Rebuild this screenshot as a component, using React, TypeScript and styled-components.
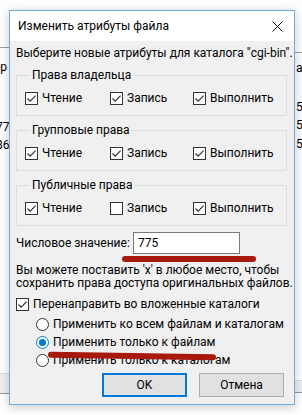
import React, { FC } from 'react';
import styled, { createGlobalStyle } from 'styled-components';

const GlobalStyle = createGlobalStyle`
  html, body {
    margin: 0;
    padding: 0;
    background: #fff;
  }
  * {
    box-sizing: border-box;
  }
`;

const font = `Roboto, "Noto Sans", "Liberation Sans", sans-serif`;

const Desk = styled.div`
  position: relative;
  width: 302px;
  height: 415px;
  overflow: hidden;
  background: #fff;
  font-family: ${font};
  font-size: 12px;
  color: #000;
`;

// pieces of the program window behind the dialog
const BackLine = styled.div<{ $top: number; $left: number; $width: number; $color?: string }>`
  position: absolute;
  top: ${(p) => p.$top}px;
  left: ${(p) => p.$left}px;
  width: ${(p) => p.$width}px;
  height: 1px;
  background: ${(p) => p.$color || '#a0a0a0'};
`;

const BackText = styled.span<{ $top: number; $left: number }>`
  position: absolute;
  top: ${(p) => p.$top}px;
  left: ${(p) => p.$left}px;
  line-height: 14px;
  white-space: nowrap;
`;

const BackPanel = styled.div<{ $top: number; $left: number; $width: number; $height: number }>`
  position: absolute;
  top: ${(p) => p.$top}px;
  left: ${(p) => p.$left}px;
  width: ${(p) => p.$width}px;
  height: ${(p) => p.$height}px;
  background: #f0f0f0;
  border-top: 1px solid #dadada;
  border-bottom: 1px solid #9a9a9a;
`;

const Dialog = styled.div`
  position: absolute;
  left: 9px;
  top: 10px;
  width: 286px;
  height: 395px;
  display: flex;
  flex-direction: column;
  border: 1px solid #6aaee3;
  background: #f0f0f0;
  box-shadow: 0 2px 10px rgba(0, 0, 0, 0.22);
`;

const TitleBar = styled.div`
  height: 30px;
  flex: none;
  display: flex;
  align-items: center;
  justify-content: space-between;
  background: #fff;
  padding-left: 8px;
`;

const Title = styled.span`
  font-size: 12px;
  line-height: 15px;
`;

const CloseBox = styled.div`
  width: 34px;
  height: 30px;
  display: flex;
  align-items: center;
  justify-content: center;
`;

const Body = styled.div`
  flex: 1;
  display: flex;
  flex-direction: column;
  padding: 5px 7px 0 6px;
`;

const Intro = styled.div`
  line-height: 15px;
  white-space: nowrap;
`;

const Group = styled.fieldset`
  margin: 7px 0 0 0;
  padding: 8px 0 9px 8px;
  border: 1px solid #dcdcdc;
  min-width: 0;
`;

const Legend = styled.legend`
  padding: 0 2px;
  margin-left: 5px;
  line-height: 15px;
`;

const CheckRow = styled.div`
  display: grid;
  grid-template-columns: 85px 83px 1fr;
`;

const CheckLabel = styled.label`
  display: flex;
  align-items: center;
  gap: 4px;
  line-height: 15px;
  white-space: nowrap;
`;

const Box = styled.span`
  width: 13px;
  height: 13px;
  flex: none;
  border: 1px solid #333;
  background: #fff;
  display: flex;
  align-items: center;
  justify-content: center;
`;

const NumericRow = styled.div`
  margin-top: 6px;
  display: flex;
  align-items: center;
  height: 22px;
`;

const NumericLabel = styled.span`
  width: 117px;
  flex: none;
  line-height: 15px;
  white-space: nowrap;
`;

const NumInput = styled.div`
  width: 107px;
  height: 22px;
  border: 1px solid #7a7a7a;
  background: #fff;
  padding-left: 4px;
  display: flex;
  align-items: center;
  line-height: 15px;
`;

const Hint = styled.div`
  margin-top: 10px;
  line-height: 13px;
  white-space: nowrap;
`;

const Recursive = styled.div`
  margin-top: 7px;
`;

const RadioList = styled.div`
  margin-top: 3px;
  padding-left: 20px;
  display: flex;
  flex-direction: column;
`;

const RadioLabel = styled.label`
  height: 18px;
  display: flex;
  align-items: center;
  gap: 4px;
  white-space: nowrap;
`;

const RadioDot = styled.span<{ $on?: boolean }>`
  width: 13px;
  height: 13px;
  flex: none;
  border-radius: 50%;
  border: 1px solid ${(p) => (p.$on ? '#0078d7' : '#333')};
  background: #fff;
  display: flex;
  align-items: center;
  justify-content: center;

  &::after {
    content: '';
    display: ${(p) => (p.$on ? 'block' : 'none')};
    width: 7px;
    height: 7px;
    border-radius: 50%;
    background: #0078d7;
  }
`;

const Buttons = styled.div`
  margin-top: 4px;
  display: flex;
  justify-content: flex-end;
  gap: 12px;
  padding-right: 3px;
`;

const Button = styled.button<{ $focused?: boolean }>`
  width: 85px;
  height: 24px;
  font-family: ${font};
  font-size: 12px;
  color: #000;
  background: #e1e1e1;
  border: ${(p) => (p.$focused ? '2px solid #0078d7' : '1px solid #adadad')};
  padding: 0;
`;

const Marker = styled.div<{ $top: number; $left: number; $width: number; $tilt?: number }>`
  position: absolute;
  top: ${(p) => p.$top}px;
  left: ${(p) => p.$left}px;
  width: ${(p) => p.$width}px;
  height: 6px;
  border-radius: 3px;
  background: #a8180b;
  transform: rotate(${(p) => p.$tilt || 0}deg);
`;

const Tick = () => (
  <svg width="11" height="11" viewBox="0 0 11 11">
    <path d="M1.5 5.5 L4.2 8.2 L9.6 2.6" fill="none" stroke="#333" strokeWidth="1.2" />
  </svg>
);

const Check: FC<{ checked?: boolean; children: React.ReactNode }> = ({ checked, children }) => (
  <CheckLabel>
    <Box>{checked && <Tick />}</Box>
    {children}
  </CheckLabel>
);

const Radio: FC<{ on?: boolean; children: React.ReactNode }> = ({ on, children }) => (
  <RadioLabel>
    <RadioDot $on={on} />
    {children}
  </RadioLabel>
);

const PermGroup: FC<{ title: string; write: boolean }> = ({ title, write }) => (
  <Group>
    <Legend>{title}</Legend>
    <CheckRow>
      <Check checked>Чтение</Check>
      <Check checked={write}>Запись</Check>
      <Check checked>Выполнить</Check>
    </CheckRow>
  </Group>
);

export default function App() {
  return (
    <Desk>
      <GlobalStyle />
      <BackLine $top={47} $left={0} $width={9} />
      <BackLine $top={52} $left={295} $width={7} />
      <BackText $top={60} $left={-6}>ер</BackText>
      <BackText $top={61} $left={296}>а,</BackText>
      <BackText $top={100} $left={296}>5</BackText>
      <BackText $top={118} $left={296}>5</BackText>
      <BackText $top={137} $left={296}>5</BackText>
      <BackText $top={120} $left={-4}>77</BackText>
      <BackText $top={138} $left={-4}>86</BackText>
      <BackPanel $top={373} $left={0} $width={9} $height={21} />
      <BackPanel $top={380} $left={295} $width={7} $height={13} />

      <Dialog>
        <TitleBar>
          <Title>Изменить атрибуты файла</Title>
          <CloseBox>
            <svg width="11" height="11" viewBox="0 0 11 11">
              <path d="M0.5 0.5 L10.5 10.5 M10.5 0.5 L0.5 10.5" stroke="#111" strokeWidth="1" />
            </svg>
          </CloseBox>
        </TitleBar>
        <Body>
          <Intro>Выберите новые атрибуты для каталога "cgi-bin".</Intro>
          <PermGroup title="Права владельца" write />
          <PermGroup title="Групповые права" write />
          <PermGroup title="Публичные права" write={false} />
          <NumericRow>
            <NumericLabel>Числовое значение:</NumericLabel>
            <NumInput>775</NumInput>
          </NumericRow>
          <Hint>
            Вы можете поставить 'x' в любое место, чтобы
            <br />
            сохранить права доступа оригинальных файлов.
          </Hint>
          <Recursive>
            <Check checked>Перенаправить во вложенные каталоги</Check>
          </Recursive>
          <RadioList>
            <Radio>Применить ко всем файлам и каталогам</Radio>
            <Radio on>Применить только к файлам</Radio>
            <Radio>Применить только к каталогам</Radio>
          </RadioList>
          <Buttons>
            <Button $focused>OK</Button>
            <Button>Отмена</Button>
          </Buttons>
        </Body>
      </Dialog>

      <Marker $top={256} $left={122} $width={134} />
      <Marker $top={353} $left={48} $width={168} $tilt={0.8} />
    </Desk>
  );
}
